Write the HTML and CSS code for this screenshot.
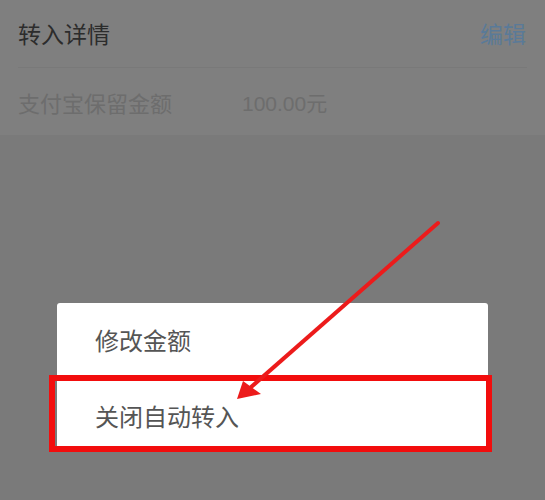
FILE: index.html
```html
<!DOCTYPE html>
<html lang="zh">
<head>
<meta charset="utf-8">
<link rel="stylesheet" href="styles.css">
</head>
<body>
<div class="page">
  <section class="details">
    <div class="header">
      <span class="title">转入详情</span>
      <span class="edit">编辑</span>
    </div>
    <div class="row">
      <span class="label">支付宝保留金额</span>
      <span class="value">100.00元</span>
    </div>
  </section>
  <div class="sheet">
    <div class="item">修改金额</div>
    <div class="item">关闭自动转入</div>
  </div>
  <div class="highlight"></div>
  <svg class="arrow" width="545" height="500" viewBox="0 0 545 500">
    <line x1="438" y1="223" x2="250" y2="388" stroke="#ec1b1b" stroke-width="4" stroke-linecap="round"/>
    <polygon points="237,399 243,381 261,394" fill="#ec1b1b"/>
  </svg>
</div>
</body>
</html>
```
FILE: styles.css
```css
html, body {
  margin: 0;
  padding: 0;
  background: #7a7a7a;
}
.page {
  position: relative;
  width: 545px;
  height: 500px;
  overflow: hidden;
  font-family: "Noto Sans CJK SC", "Noto Sans", sans-serif;
}
.details {
  background: #7f7f7f;
  height: 135px;
}
.header {
  height: 67px;
  margin: 0 18px;
  border-bottom: 1px solid #797979;
  display: flex;
  align-items: center;
  justify-content: space-between;
}
.title {
  font-size: 23px;
  color: #2c2c2c;
  margin-top: -2px;
}
.edit {
  font-size: 23px;
  color: #5a7a98;
  margin-top: -2px;
  margin-right: 1px;
}
.row {
  height: 67px;
  padding: 0 18px;
  display: flex;
  align-items: center;
}
.label {
  font-size: 22px;
  color: #6d6d6d;
  width: 224px;
}
.value {
  font-size: 21px;
  color: #6d6d6d;
  font-family: "Liberation Sans", "Noto Sans CJK SC", sans-serif;
}
.sheet {
  margin: 168px 0 0 57px;
  width: 431px;
  background: #fff;
  border-radius: 3px;
}
.item {
  height: 73px;
  display: flex;
  align-items: center;
  padding-left: 38px;
  font-size: 24px;
  color: #555;
}
.item:last-child {
  padding-top: 6px;
  height: 67px;
}
.highlight {
  position: absolute;
  left: 49px;
  top: 375px;
  width: 431px;
  height: 65px;
  border: 6px solid #f20d0d;
}
.arrow {
  position: absolute;
  left: 0;
  top: 0;
}
```
